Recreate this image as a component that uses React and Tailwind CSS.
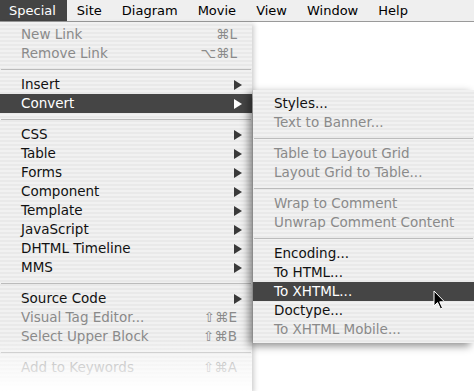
import React from "react";

const font = { fontFamily: '"DejaVu Sans", Verdana, sans-serif' };

const mainItems = [
  { label: "New Link", sc: "⌘L", dis: true },
  { label: "Remove Link", sc: "⌥⌘L", dis: true },
  { sep: true },
  { label: "Insert", arrow: true },
  { label: "Convert", arrow: true, hi: true },
  { sep: true },
  { label: "CSS", arrow: true },
  { label: "Table", arrow: true },
  { label: "Forms", arrow: true },
  { label: "Component", arrow: true },
  { label: "Template", arrow: true },
  { label: "JavaScript", arrow: true },
  { label: "DHTML Timeline", arrow: true },
  { label: "MMS", arrow: true },
  { sep: true },
  { label: "Source Code", arrow: true },
  { label: "Visual Tag Editor...", sc: "⇧⌘E", dis: true },
  { label: "Select Upper Block", sc: "⇧⌘B", dis: true },
  { sep: true },
  { label: "Add to Keywords", sc: "⇧⌘A", dis: true },
];

const subItems = [
  { label: "Styles..." },
  { label: "Text to Banner...", dis: true },
  { sep: true },
  { label: "Table to Layout Grid", dis: true },
  { label: "Layout Grid to Table...", dis: true },
  { sep: true },
  { label: "Wrap to Comment", dis: true },
  { label: "Unwrap Comment Content", dis: true },
  { sep: true },
  { label: "Encoding..." },
  { label: "To HTML..." },
  { label: "To XHTML...", hi: true },
  { label: "Doctype..." },
  { label: "To XHTML Mobile...", dis: true },
];

function Arrow({ white }) {
  return (
    <svg width="8" height="10" viewBox="0 0 8 10" className="shrink-0">
      <path d="M0 0 L8 5 L0 10 Z" fill={white ? "#ffffff" : "#3a3a3a"} />
    </svg>
  );
}

function Row({ item, padL }) {
  if (item.sep) {
    return (
      <div className="h-[12px] flex items-center px-[1px]">
        <div className="h-px w-full bg-[#bcbcbc]" />
      </div>
    );
  }
  const color = item.hi
    ? "text-white bg-[#454545]"
    : item.dis
    ? "text-[#8a8a8a]"
    : "text-[#111111]";
  return (
    <div
      className={`h-[19px] flex items-center justify-between ${padL} ${
        item.arrow ? "pr-[10px]" : "pr-[15px]"
      } ${color}`}
    >
      <span className="leading-none">{item.label}</span>
      {item.sc && <span className="leading-none">{item.sc}</span>}
      {item.arrow && <Arrow white={item.hi} />}
    </div>
  );
}

const stripes =
  "bg-[repeating-linear-gradient(to_bottom,#f1f1f1_0px,#f1f1f1_2px,#e9e9e9_2px,#e9e9e9_4px)]";

export default function App() {
  const bar = ["Site", "Diagram", "Movie", "View", "Window", "Help"];
  return (
    <div
      className="w-[474px] h-[391px] bg-white overflow-hidden relative text-[13.5px]"
      style={font}
    >
      <div className="h-[22px] flex items-center bg-[#efefef] border-b border-[#9a9a9a] text-[13px] text-black">
        <div className="h-full flex items-center pl-[9px] pr-[11px] bg-[#444444] text-white">
          Special
        </div>
        {bar.map((b) => (
          <div key={b} className="h-full flex items-center px-[10px]">
            {b}
          </div>
        ))}
      </div>
      <div className="flex items-start">
        <div
          className={`relative w-[252px] h-[369px] pt-[3px] ${stripes} shadow-[2px_2px_5px_rgba(0,0,0,0.2)]`}
        >
          {mainItems.map((it, i) => (
            <Row key={i} item={it} padL="pl-[21px]" />
          ))}
          <div className="absolute left-0 right-0 bottom-0 h-[52px] pointer-events-none bg-[linear-gradient(to_bottom,rgba(255,255,255,0)_0%,rgba(255,255,255,0.55)_45%,rgba(255,255,255,1)_100%)]" />
        </div>
        <div
          className={`relative z-10 mt-[68px] ml-[1px] flex-1 pt-[4px] pb-[4px] ${stripes} shadow-[-4px_3px_8px_rgba(0,0,0,0.45)]`}
        >
          {subItems.map((it, i) => (
            <Row key={i} item={it} padL="pl-[21px]" />
          ))}
        </div>
      </div>
      <svg
        className="absolute left-[433px] top-[290px] z-20"
        width="14"
        height="21"
        viewBox="0 0 14 21"
      >
        <path
          d="M1 1 L1 16 L4.5 12.5 L7.5 19 L9.5 18 L6.7 11.8 L11.5 11.8 Z"
          fill="#000"
          stroke="#fff"
          strokeWidth="1"
          strokeLinejoin="round"
        />
      </svg>
    </div>
  );
}
